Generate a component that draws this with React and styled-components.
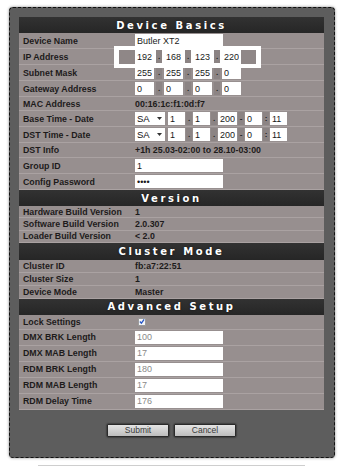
import React from 'react';
import styled, { createGlobalStyle } from 'styled-components';

const GlobalStyle = createGlobalStyle`
    html, body {
        margin: 0;
        padding: 0;
        background: #ffffff;
    }
    body {
        font-family: "Liberation Sans", Arial, sans-serif;
    }
`;

const Page = styled.div`
    width: 345px;
    padding: 7px 0 0 9px;
    box-sizing: border-box;
`;

const Panel = styled.div`
    width: 326px;
    height: 451px;
    box-sizing: border-box;
    padding: 9px 10px 0 9px;
    background: #5d5d5d;
    border: 1px dashed #111;
    border-radius: 4px;
    box-shadow: 0 0 3px rgba(0, 0, 0, 0.45);
`;

const Table = styled.div`
    display: flex;
    flex-direction: column;
`;

const Header = styled.div`
    height: ${(p) => p.h || 16}px;
    display: flex;
    align-items: center;
    justify-content: center;
    background: linear-gradient(#323232, #262626);
    color: #fff;
    font-family: "DejaVu Sans", Verdana, sans-serif;
    font-weight: bold;
    font-size: 10px;
    letter-spacing: 2.6px;
    text-shadow: 0 0 2px rgba(0, 0, 0, 0.6);
`;

const Row = styled.div`
    height: ${(p) => p.h || 16}px;
    box-sizing: border-box;
    display: grid;
    grid-template-columns: 111px 1fr;
    background: #978f8f;
    border-bottom: 1px solid #aaa2a2;
`;

const Label = styled.div`
    display: flex;
    align-items: center;
    padding-left: 4px;
    font-size: 8.8px;
    font-weight: bold;
    color: #1d1b1b;
    white-space: nowrap;
`;

const Value = styled.div`
    display: flex;
    align-items: center;
    padding-left: 5px;
    font-size: 8.8px;
    font-weight: bold;
    color: #1d1b1b;
    white-space: nowrap;
`;

const Field = styled.input`
    width: ${(p) => p.w || 88}px;
    height: 13px;
    box-sizing: border-box;
    border: none;
    outline: none;
    margin: 0;
    padding: 0 2px;
    background: #fff;
    font-family: "Liberation Sans", Arial, sans-serif;
    font-size: 9px;
    color: ${(p) => (p.muted ? '#8a8a8a' : '#1a1a1a')};
`;

const Sep = styled.span`
    width: 6px;
    height: 13px;
    margin: 0 ${(p) => p.m ?? 2}px;
    background: #8c8484;
    display: flex;
    align-items: center;
    justify-content: center;
    font-size: 8px;
    color: #222;
`;

const Highlight = styled.div`
    position: relative;
    z-index: 1;
    display: flex;
    align-items: center;
    margin: -4px 0 -4px -21px;
    padding: 4px 5px;
    background: #fff;
`;

const Pad = styled.span`
    width: ${(p) => p.w}px;
    height: 14px;
    background: #8f8787;
`;

const FakeSelect = styled.div`
    width: 30px;
    height: 13px;
    box-sizing: border-box;
    margin-right: 3px;
    padding: 0 3px 0 2px;
    display: flex;
    align-items: center;
    justify-content: space-between;
    background: #fff;
    font-weight: normal;
    font-size: 9.5px;
    color: #111;
`;

const Check = styled.span`
    width: 8px;
    height: 8px;
    margin-left: 3px;
    box-sizing: border-box;
    border: 1px solid #9a9a9a;
    background: #f4f4f4;
    display: flex;
    align-items: center;
    justify-content: center;
`;

const Buttons = styled.div`
    display: flex;
    justify-content: center;
    gap: 5px;
    margin-top: 14px;
`;

const Button = styled.button`
    width: 62px;
    height: 13px;
    padding: 0;
    border: 1px solid #2a2a2a;
    border-radius: 1px;
    background: linear-gradient(#e4e4e4, #bdbdbd);
    box-shadow: 0 0 2px #000;
    font-family: "Liberation Sans", Arial, sans-serif;
    font-size: 8.5px;
    color: #3a3a3a;
`;

const Rule = styled.div`
    width: 267px;
    height: 3px;
    margin: 7px 0 0 29px;
    background: #cecece;
`;

const Arrow = () => (
    <svg width="5" height="3" viewBox="0 0 5 3">
        <path d="M0 0h5L2.5 3z" fill="#333" />
    </svg>
);

const Tick = () => (
    <svg width="7" height="7" viewBox="0 0 7 7">
        <path d="M1 3.5l1.8 2L6 1" fill="none" stroke="#2656c8" strokeWidth="1.5" />
    </svg>
);

const Quad = ({ values }) => (
    <>
        <Field w={19} defaultValue={values[0]} />
        <Sep>.</Sep>
        <Field w={19} defaultValue={values[1]} />
        <Sep>.</Sep>
        <Field w={19} defaultValue={values[2]} />
        <Sep>.</Sep>
        <Field w={19} defaultValue={values[3]} />
    </>
);

const TimeDate = () => (
    <>
        <FakeSelect>SA <Arrow /></FakeSelect>
        <Field w={17} defaultValue="1" />
        <Sep m={1}>.</Sep>
        <Field w={17} defaultValue="1" />
        <Sep m={1}>.</Sep>
        <Field w={19} defaultValue="2000" />
        <Sep m={1}>-</Sep>
        <Field w={17} defaultValue="0" />
        <Sep m={1}>:</Sep>
        <Field w={17} defaultValue="11" />
    </>
);

const TextRow = ({ label, value, h }) => (
    <Row h={h}>
        <Label>{label}</Label>
        <Value>{value}</Value>
    </Row>
);

const FieldRow = ({ label, value, muted, type }) => (
    <Row>
        <Label>{label}</Label>
        <Value><Field type={type} defaultValue={value} muted={muted} /></Value>
    </Row>
);

export default function App() {
    return (
        <>
            <GlobalStyle />
            <Page>
                <Panel>
                    <Table>
                        <Header>Device Basics</Header>
                        <FieldRow label="Device Name" value="Butler XT2" />
                        <Row>
                            <Label>IP Address</Label>
                            <Value>
                                <Highlight>
                                    <Pad w={16} />
                                    <Quad values={['192', '168', '123', '220']} />
                                    <Pad w={15} />
                                </Highlight>
                            </Value>
                        </Row>
                        <Row>
                            <Label>Subnet Mask</Label>
                            <Value><Quad values={['255', '255', '255', '0']} /></Value>
                        </Row>
                        <Row>
                            <Label>Gateway Address</Label>
                            <Value><Quad values={['0', '0', '0', '0']} /></Value>
                        </Row>
                        <TextRow h={14} label="MAC Address" value="00:16:1c:f1:0d:f7" />
                        <Row>
                            <Label>Base Time - Date</Label>
                            <Value><TimeDate /></Value>
                        </Row>
                        <Row>
                            <Label>DST Time - Date</Label>
                            <Value><TimeDate /></Value>
                        </Row>
                        <TextRow h={15} label="DST Info" value="+1h 25.03-02:00 to 28.10-03:00" />
                        <FieldRow label="Group ID" value="1" />
                        <FieldRow label="Config Password" value="1234" type="password" />

                        <Header>Version</Header>
                        <TextRow h={12.3} label="Hardware Build Version" value="1" />
                        <TextRow h={12.3} label="Software Build Version" value="2.0.307" />
                        <TextRow h={12.4} label="Loader Build Version" value="< 2.0" />

                        <Header h={17}>Cluster Mode</Header>
                        <TextRow h={13} label="Cluster ID" value="fb:a7:22:51" />
                        <TextRow h={13} label="Cluster Size" value="1" />
                        <TextRow h={13} label="Device Mode" value="Master" />

                        <Header>Advanced Setup</Header>
                        <Row h={15}>
                            <Label>Lock Settings</Label>
                            <Value><Check><Tick /></Check></Value>
                        </Row>
                        <FieldRow label="DMX BRK Length" value="100" muted />
                        <FieldRow label="DMX MAB Length" value="17" muted />
                        <FieldRow label="RDM BRK Length" value="180" muted />
                        <FieldRow label="RDM MAB Length" value="17" muted />
                        <FieldRow label="RDM Delay Time" value="176" muted />
                    </Table>
                    <Buttons>
                        <Button>Submit</Button>
                        <Button>Cancel</Button>
                    </Buttons>
                </Panel>
                <Rule />
            </Page>
        </>
    );
}
